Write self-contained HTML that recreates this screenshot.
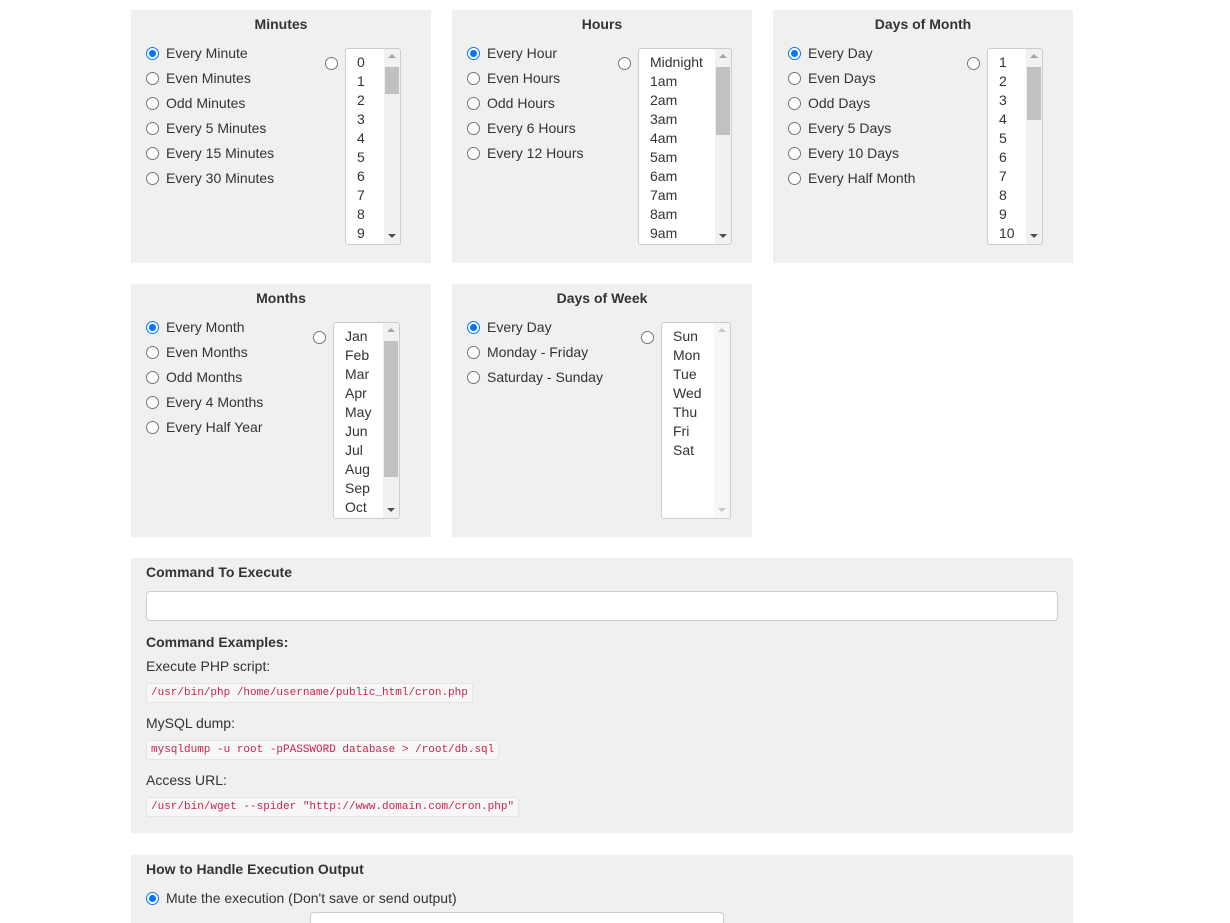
<!DOCTYPE html>
<html><head><meta charset="utf-8">
<style>
*{box-sizing:border-box;margin:0;padding:0}
html{width:1230px;height:923px;overflow:hidden}
body{width:1230px;height:923px;background:#fff;font-family:"Liberation Sans",Arial,sans-serif;font-size:14px;color:#333;position:relative;overflow:hidden}
.p{position:absolute;background:#f0f0f0}
.h{position:absolute;left:0;right:0;text-align:center;font-weight:bold;top:6px;font-size:14px}
.r{position:absolute;width:13px;height:13px;border:1px solid #767676;border-radius:50%;background:#fff}
.r.on{border:1px solid #0075ff;}
.r.on::after{content:"";position:absolute;left:2px;top:2px;width:7px;height:7px;border-radius:50%;background:#0075ff}
.l{position:absolute;white-space:nowrap}
.s{position:absolute;background:#fff;border:1px solid #ccc;border-radius:3px;overflow:hidden}
.s .it{position:absolute;top:4px;line-height:19px}
.sb{position:absolute;right:0;top:0;bottom:0;width:16px;background:#f1f1f1}
.sb .t{position:absolute;left:1px;right:1px;background:#c1c1c1}
.sb .u,.sb .d{position:absolute;left:4px;width:0;height:0;border-left:4px solid transparent;border-right:4px solid transparent}
.sb .u{top:5px;border-bottom:4px solid #a3a3a3}
.sb .d{bottom:6px;border-top:4px solid #505050}
.code{position:absolute;left:15px;font-family:"Liberation Mono",monospace;font-size:11px;color:#c7254e;background:#f7f7f7;border:1px solid #e4e4e4;border-radius:3px;padding:2px 4px;line-height:14px;white-space:nowrap}
.inp{position:absolute;background:#fff;border:1px solid #ccc;border-radius:4px}
</style></head><body>

<div class="p" style="left:131px;top:10px;width:300px;height:253px">
<div class="h">Minutes</div>
<div class="r on" style="left:15px;top:37px"></div><div class="l" style="left:35px;top:35px">Every Minute</div>
<div class="r" style="left:15px;top:62px"></div><div class="l" style="left:35px;top:60px">Even Minutes</div>
<div class="r" style="left:15px;top:87px"></div><div class="l" style="left:35px;top:85px">Odd Minutes</div>
<div class="r" style="left:15px;top:112px"></div><div class="l" style="left:35px;top:110px">Every 5 Minutes</div>
<div class="r" style="left:15px;top:137px"></div><div class="l" style="left:35px;top:135px">Every 15 Minutes</div>
<div class="r" style="left:15px;top:162px"></div><div class="l" style="left:35px;top:160px">Every 30 Minutes</div>
<div class="r" style="left:194px;top:47px"></div>
<div class="s" style="left:214px;top:38px;width:56px;height:197px">
<div class="it" style="left:11px">0<br>1<br>2<br>3<br>4<br>5<br>6<br>7<br>8<br>9</div>
<div class="sb"><div class="u"></div><div class="t" style="top:18px;height:27px"></div><div class="d"></div></div></div>
</div>

<div class="p" style="left:452px;top:10px;width:300px;height:253px">
<div class="h">Hours</div>
<div class="r on" style="left:15px;top:37px"></div><div class="l" style="left:35px;top:35px">Every Hour</div>
<div class="r" style="left:15px;top:62px"></div><div class="l" style="left:35px;top:60px">Even Hours</div>
<div class="r" style="left:15px;top:87px"></div><div class="l" style="left:35px;top:85px">Odd Hours</div>
<div class="r" style="left:15px;top:112px"></div><div class="l" style="left:35px;top:110px">Every 6 Hours</div>
<div class="r" style="left:15px;top:137px"></div><div class="l" style="left:35px;top:135px">Every 12 Hours</div>
<div class="r" style="left:166px;top:47px"></div>
<div class="s" style="left:186px;top:38px;width:94px;height:197px">
<div class="it" style="left:11px">Midnight<br>1am<br>2am<br>3am<br>4am<br>5am<br>6am<br>7am<br>8am<br>9am</div>
<div class="sb"><div class="u"></div><div class="t" style="top:18px;height:68px"></div><div class="d"></div></div></div>
</div>

<div class="p" style="left:773px;top:10px;width:300px;height:253px">
<div class="h">Days of Month</div>
<div class="r on" style="left:15px;top:37px"></div><div class="l" style="left:35px;top:35px">Every Day</div>
<div class="r" style="left:15px;top:62px"></div><div class="l" style="left:35px;top:60px">Even Days</div>
<div class="r" style="left:15px;top:87px"></div><div class="l" style="left:35px;top:85px">Odd Days</div>
<div class="r" style="left:15px;top:112px"></div><div class="l" style="left:35px;top:110px">Every 5 Days</div>
<div class="r" style="left:15px;top:137px"></div><div class="l" style="left:35px;top:135px">Every 10 Days</div>
<div class="r" style="left:15px;top:162px"></div><div class="l" style="left:35px;top:160px">Every Half Month</div>
<div class="r" style="left:194px;top:47px"></div>
<div class="s" style="left:214px;top:38px;width:56px;height:197px">
<div class="it" style="left:11px">1<br>2<br>3<br>4<br>5<br>6<br>7<br>8<br>9<br>10</div>
<div class="sb"><div class="u"></div><div class="t" style="top:18px;height:53px"></div><div class="d"></div></div></div>
</div>

<div class="p" style="left:131px;top:284px;width:300px;height:253px">
<div class="h">Months</div>
<div class="r on" style="left:15px;top:37px"></div><div class="l" style="left:35px;top:35px">Every Month</div>
<div class="r" style="left:15px;top:62px"></div><div class="l" style="left:35px;top:60px">Even Months</div>
<div class="r" style="left:15px;top:87px"></div><div class="l" style="left:35px;top:85px">Odd Months</div>
<div class="r" style="left:15px;top:112px"></div><div class="l" style="left:35px;top:110px">Every 4 Months</div>
<div class="r" style="left:15px;top:137px"></div><div class="l" style="left:35px;top:135px">Every Half Year</div>
<div class="r" style="left:182px;top:47px"></div>
<div class="s" style="left:202px;top:38px;width:67px;height:197px">
<div class="it" style="left:11px">Jan<br>Feb<br>Mar<br>Apr<br>May<br>Jun<br>Jul<br>Aug<br>Sep<br>Oct</div>
<div class="sb"><div class="u"></div><div class="t" style="top:18px;height:136px"></div><div class="d"></div></div></div>
</div>

<div class="p" style="left:452px;top:284px;width:300px;height:253px">
<div class="h">Days of Week</div>
<div class="r on" style="left:15px;top:37px"></div><div class="l" style="left:35px;top:35px">Every Day</div>
<div class="r" style="left:15px;top:62px"></div><div class="l" style="left:35px;top:60px">Monday - Friday</div>
<div class="r" style="left:15px;top:87px"></div><div class="l" style="left:35px;top:85px">Saturday - Sunday</div>
<div class="r" style="left:189px;top:47px"></div>
<div class="s" style="left:209px;top:38px;width:70px;height:197px">
<div class="it" style="left:11px">Sun<br>Mon<br>Tue<br>Wed<br>Thu<br>Fri<br>Sat</div>
<div class="sb" style="background:#f6f6f6"><div class="u" style="border-bottom-color:#c8c8c8"></div><div class="d" style="border-top-color:#c8c8c8"></div></div></div>
</div>

<div class="p" style="left:131px;top:558px;width:942px;height:275px">
<div class="l" style="left:15px;top:6px;font-weight:bold">Command To Execute</div>
<div class="inp" style="left:15px;top:33px;width:912px;height:30px"></div>
<div class="l" style="left:15px;top:76px;font-weight:bold">Command Examples:</div>
<div class="l" style="left:15px;top:100px">Execute PHP script:</div>
<div class="code" style="top:125px">/usr/bin/php /home/username/public_html/cron.php</div>
<div class="l" style="left:15px;top:157px">MySQL dump:</div>
<div class="code" style="top:182px">mysqldump -u root -pPASSWORD database &gt; /root/db.sql</div>
<div class="l" style="left:15px;top:214px">Access URL:</div>
<div class="code" style="top:239px">/usr/bin/wget --spider "http://www.domain.com/cron.php"</div>
</div>

<div class="p" style="left:131px;top:855px;width:942px;height:68px">
<div class="l" style="left:15px;top:6px;font-weight:bold">How to Handle Execution Output</div>
<div class="r on" style="left:15px;top:37px"></div><div class="l" style="left:35px;top:35px">Mute the execution (Don't save or send output)</div>
<div class="inp" style="left:179px;top:57px;width:414px;height:20px;border-bottom:none;border-radius:4px 4px 0 0"></div>
</div>
</body></html>
